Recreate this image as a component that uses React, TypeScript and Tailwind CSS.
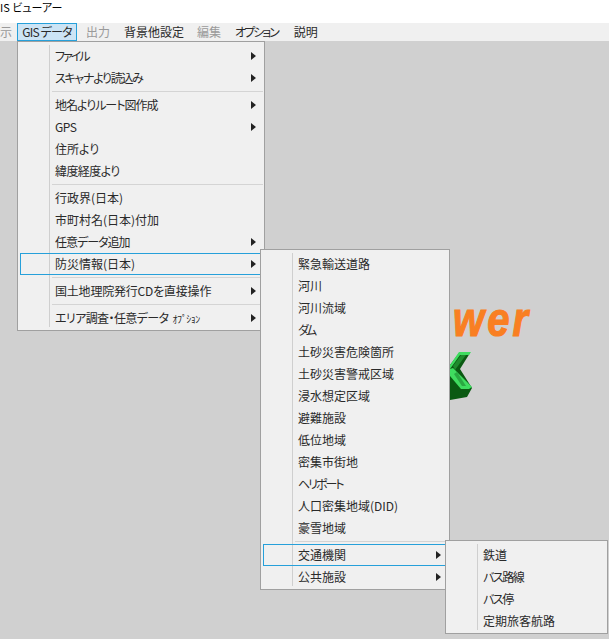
import React from 'react';

type Row = { label: React.ReactNode; arrow?: boolean; active?: boolean; tight?: string } | 'sep';

const mainMenu: Row[] = [
  { label: 'ファイル', arrow: true, tight: 'tracking-[-2px]' },
  { label: 'スキャナより読込み', arrow: true, tight: 'tracking-[-1.3px]' },
  'sep',
  { label: '地名よりルート図作成', arrow: true, tight: 'tracking-[-1px]' },
  { label: 'GPS', arrow: true, tight: 'tracking-[-0.5px]' },
  { label: '住所より' },
  { label: '緯度経度より', tight: 'tracking-[-0.6px]' },
  'sep',
  { label: '行政界(日本)' },
  { label: '市町村名(日本)付加' },
  { label: '任意データ追加', arrow: true, tight: 'tracking-[-1px]' },
  { label: '防災情報(日本)', arrow: true, active: true },
  'sep',
  { label: '国土地理院発行CDを直接操作', arrow: true, tight: 'tracking-[-0.2px]' },
  'sep',
  {
    label: (
      <>
        エリア調査・任意データ <span className="ml-[2px] text-[10px]">ｵﾌﾟｼｮﾝ</span>
      </>
    ),
    arrow: true,
    tight: 'tracking-[-0.6px]',
  },
];

const disasterMenu: Row[] = [
  { label: '緊急輸送道路' },
  { label: '河川' },
  { label: '河川流域' },
  { label: 'ダム', tight: 'tracking-[-3px]' },
  { label: '土砂災害危険箇所' },
  { label: '土砂災害警戒区域' },
  { label: '浸水想定区域' },
  { label: '避難施設' },
  { label: '低位地域' },
  { label: '密集市街地' },
  { label: 'ヘリポート', tight: 'tracking-[-2px]' },
  { label: '人口密集地域(DID)' },
  { label: '豪雪地域' },
  'sep',
  { label: '交通機関', arrow: true, active: true },
  { label: '公共施設', arrow: true },
];

const transportMenu: Row[] = [
  { label: '鉄道' },
  { label: 'バス路線', tight: 'tracking-[-1.5px]' },
  { label: 'バス停', tight: 'tracking-[-1.5px]' },
  { label: '定期旅客航路' },
];

function PopupMenu({ rows, className }: { rows: Row[]; className: string }) {
  return (
    <div className={`absolute border border-[#a0a0a0] bg-[#f0f0f0] pb-[1px] pl-[2px] pr-[1px] pt-[3px] ${className}`}>
      <div className="absolute bottom-[3px] left-[31px] top-[3px] w-px bg-[#cfcfcf]" />
      {rows.map((row, i) =>
        row === 'sep' ? (
          <div key={i} className="my-[2px] ml-[32px] h-px bg-[#d4d4d4]" />
        ) : (
          <div
            key={i}
            className={`relative flex h-[22px] items-center pl-[35px] pr-[7px] ${
              row.active ? 'outline outline-1 -outline-offset-1 outline-[#26a0da]' : ''
            }`}
          >
            <span className={`flex-1 whitespace-nowrap ${row.tight ?? ''}`}>{row.label}</span>
            {row.arrow && <span className="h-0 w-0 border-y-[4px] border-l-[5px] border-y-transparent border-l-[#222]" />}
          </div>
        ),
      )}
    </div>
  );
}

export default function App() {
  return (
    <div className="relative flex h-[639px] w-[609px] flex-col overflow-hidden bg-[#d0d0d0] font-['Noto_Sans_CJK_JP','Liberation_Sans',sans-serif] text-[12px] text-[#2a2a2a] [font-feature-settings:'palt']">
      <div className="flex h-[23px] items-center bg-white pb-[8px] text-[11px] text-black">
        <span>IS ビューアー</span>
      </div>
      <div className="flex h-[18px] bg-[#f0f0f0]">
        <div className="flex w-[17px] items-center text-[#9a9a9a]">示</div>
        <div className="flex w-[60px] items-center justify-center whitespace-nowrap border border-[#26a0da] bg-[#cce4f5] tracking-[-0.8px]">GIS データ</div>
        <div className="flex items-center pl-[9px] pr-[6px] text-[#9a9a9a]">出力</div>
        <div className="flex items-center pl-[8px] pr-[7px]">背景他設定</div>
        <div className="flex items-center px-[6px] text-[#9a9a9a]">編集</div>
        <div className="flex items-center px-[8px] tracking-[-2px]">オプション</div>
        <div className="flex items-center px-[8px]">説明</div>
      </div>

      {/* logo behind the menus */}
      <span className="absolute right-[78px] top-[303px] origin-bottom scale-y-[1.2] font-['Liberation_Sans',sans-serif] text-[40px] font-bold italic leading-none tracking-[3px] text-[#f97f22] [-webkit-text-stroke:1px_#f97f22]">
        Power
      </span>
      <svg className="absolute left-[445px] top-[345px]" width="35" height="60" viewBox="0 0 35 60">
        <path d="M5 20 L14 8 L25 8 L15 24 L27 43 L22 52 L5 55 Z" fill="#0a5a12" />
        <path d="M8 21 L16 10 L21 10 L10 25 Z" fill="#1f8a2d" />
        <path d="M5 20 L14 7 L26 7 L24 10 L15 10 L5 24 Z" fill="#3fdc5f" />
        <path d="M5 24 L8 23 L27 42 L24 44 L16 44 L5 31 Z" fill="#3fdc5f" />
        <path d="M9 29 L12 27 L21 41 L17 41 Z" fill="#2aa842" />
      </svg>

      <PopupMenu rows={mainMenu} className="left-[17px] top-[41px] w-[248px]" />
      <PopupMenu rows={disasterMenu} className="left-[260px] top-[249px] w-[190px]" />
      <PopupMenu rows={transportMenu} className="left-[445px] top-[540px] w-[163px]" />
    </div>
  );
}
